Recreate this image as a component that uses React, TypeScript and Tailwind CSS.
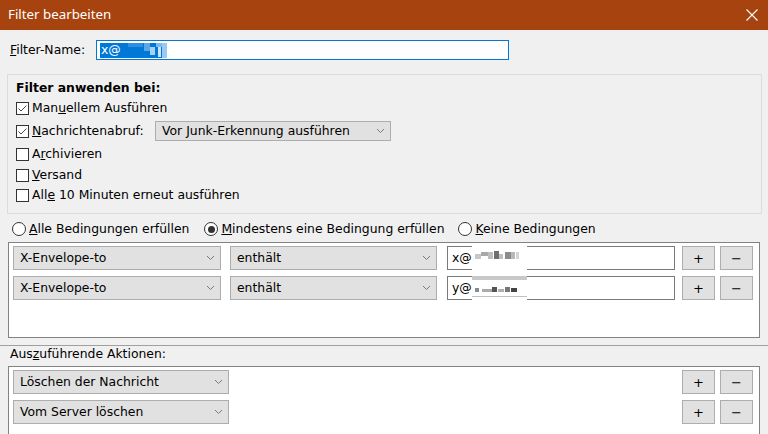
import React from "react";

function Chevron() {
  return (
    <svg width="9" height="6" viewBox="0 0 9 6" className="shrink-0">
      <polyline points="1,1 4.5,4.5 8,1" fill="none" stroke="#7a7a7a" strokeWidth="1" />
    </svg>
  );
}

function Select({ w, text, h = "h-[24px]" }: { w: string; text: string; h?: string }) {
  return (
    <div className={`${w} ${h} shrink-0 border border-[#adadad] bg-[#e1e1e1] flex items-center justify-between pl-[6px] pr-[5px]`}>
      <span className="whitespace-nowrap">{text}</span>
      <Chevron />
    </div>
  );
}

function Btn({ label }: { label: string }) {
  return (
    <div className="w-[33px] h-[24px] shrink-0 border border-[#adadad] bg-[#e1e1e1] flex items-center justify-center text-[13px]">
      {label}
    </div>
  );
}

function Checkbox({ checked }: { checked?: boolean }) {
  return (
    <div className="w-[13px] h-[13px] shrink-0 border border-[#333333] bg-white flex items-center justify-center">
      {checked && (
        <svg width="11" height="11" viewBox="0 0 11 11">
          <polyline points="1.5,5.5 4,8 9.5,2.5" fill="none" stroke="#4a4a4a" strokeWidth="1" />
        </svg>
      )}
    </div>
  );
}

function Radio({ checked }: { checked?: boolean }) {
  return (
    <div className="w-[14px] h-[14px] shrink-0 rounded-full border border-[#333333] bg-white flex items-center justify-center">
      {checked && <div className="w-[7px] h-[7px] rounded-full bg-[#333333]" />}
    </div>
  );
}

function Redact1() {
  return (
    <span className="relative inline-block w-[55px] h-[28px] bg-white -my-[3px]">
      <span className="absolute left-[3px] top-[10px] w-[6px] h-[5px] bg-[#c8c8c8]" />
      <span className="absolute left-[9px] top-[8px] w-[7px] h-[4px] bg-[#a8a8a8]" />
      <span className="absolute left-[16px] top-[8px] w-[5px] h-[7px] bg-[#bdbdbd]" />
      <span className="absolute left-[22px] top-[7px] w-[5px] h-[8px] bg-[#6e6e6e]" />
      <span className="absolute left-[27px] top-[10px] w-[4px] h-[5px] bg-[#c0c0c0]" />
      <span className="absolute left-[33px] top-[8px] w-[6px] h-[7px] bg-[#8c8c8c]" />
      <span className="absolute left-[39px] top-[8px] w-[4px] h-[7px] bg-[#b8b8b8]" />
      <span className="absolute left-[44px] top-[8px] w-[3px] h-[7px] bg-[#d4d4d4]" />
    </span>
  );
}

function Redact2() {
  return (
    <span className="relative inline-block w-[55px] h-[24px] bg-white -my-[2px]">
      <span className="absolute left-0 top-0 w-[55px] h-[4px] bg-[#c8c8c8]" />
      <span className="absolute left-[3px] top-[12px] w-[4px] h-[4px] bg-[#8a8a8a]" />
      <span className="absolute left-[10px] top-[13px] w-[10px] h-[3px] bg-[#aaaaaa]" />
      <span className="absolute left-[20px] top-[11px] w-[5px] h-[5px] bg-[#555555]" />
      <span className="absolute left-[26px] top-[13px] w-[6px] h-[3px] bg-[#b0b0b0]" />
      <span className="absolute left-[33px] top-[11px] w-[5px] h-[5px] bg-[#777777]" />
      <span className="absolute left-[39px] top-[12px] w-[6px] h-[4px] bg-[#444444]" />
      <span className="absolute left-0 top-[20px] w-[55px] h-[1px] bg-[#c0c0c0]" />
    </span>
  );
}

function CondRow({ prefix, redact }: { prefix: string; redact: React.ReactNode }) {
  return (
    <div className="h-[24px] flex items-center pr-[6px]">
      <Select w="w-[208px]" text="X-Envelope-to" />
      <div className="ml-[9px]">
        <Select w="w-[207px]" text="enthält" />
      </div>
      <div className="ml-[10px] w-[228px] h-[24px] border border-[#7a7a7a] bg-white flex items-center pl-[4px] overflow-visible">
        <span>{prefix}</span>
        {redact}
      </div>
      <div className="ml-auto flex gap-[5px]">
        <Btn label="+" />
        <Btn label="−" />
      </div>
    </div>
  );
}

function ActRow({ text }: { text: string }) {
  return (
    <div className="h-[24px] flex items-center pr-[6px]">
      <Select w="w-[216px]" text={text} />
      <div className="ml-auto flex gap-[5px]">
        <Btn label="+" />
        <Btn label="−" />
      </div>
    </div>
  );
}

export default function App() {
  return (
    <div className="w-[768px] h-[434px] overflow-hidden bg-[#f0f0f0] text-[12.4px] text-black font-['DejaVu_Sans',sans-serif] leading-none">
      {/* Title bar */}
      <div className="h-[30px] bg-[#a6430f] flex items-center justify-between pl-[8px] pr-[10px]">
        <span className="text-white text-[13.3px] font-['Noto_Sans',sans-serif]">Filter bearbeiten</span>
        <svg width="12" height="12" viewBox="0 0 12 12">
          <path d="M0.5 0.5 L11.5 11.5 M11.5 0.5 L0.5 11.5" stroke="#ffffff" strokeWidth="1.1" />
        </svg>
      </div>

      {/* Filter name */}
      <div className="mt-[10px] h-[20px] flex items-center pl-[10px]">
        <span className="w-[86px]">
          <u>F</u>ilter-Name:
        </span>
        <div className="w-[413px] h-[20px] border border-[#0078d7] bg-white flex items-center pl-[3px]">
          <span className="relative flex items-center h-[15px] bg-[#0078d7] text-white pl-[1px] w-[67px]">
            x@
            <span className="absolute left-[28px] top-0 w-[15px] h-[4px] bg-[#2f8ee0]" />
            <span className="absolute left-[44px] top-0 w-[6px] h-[8px] bg-[#5aa8ea]" />
            <span className="absolute left-[50px] top-[4px] w-[5px] h-[8px] bg-[#a9d0f3]" />
            <span className="absolute left-[56px] top-0 w-[6px] h-[4px] bg-[#7db9ee]" />
            <span className="absolute left-[58px] top-[4px] w-[3px] h-[10px] bg-[#cde3f7]" />
            <span className="absolute left-[62px] top-0 w-[5px] h-[15px] bg-[#9ac9f1]" />
          </span>
        </div>
      </div>

      {/* Fieldset */}
      <div className="mt-[14px] ml-[7px] w-[755px] h-[140px] border border-[#dcdcdc] pl-[8px] pt-[5px] flex flex-col">
        <div className="h-[17px] flex items-center font-bold">Filter anwenden bei:</div>
        <div className="h-[22px] flex items-center gap-[3px]">
          <Checkbox checked />
          <span>
            Man<u>u</u>ellem Ausführen
          </span>
        </div>
        <div className="h-[24px] flex items-center gap-[3px]">
          <Checkbox checked />
          <span className="w-[120px]">
            <u>N</u>achrichtenabruf:
          </span>
          <Select w="w-[236px]" h="h-[20px]" text="Vor Junk-Erkennung ausführen" />
        </div>
        <div className="h-[22px] flex items-center gap-[3px]">
          <Checkbox />
          <span>
            A<u>r</u>chivieren
          </span>
        </div>
        <div className="h-[20px] flex items-center gap-[3px]">
          <Checkbox />
          <span>
            <u>V</u>ersand
          </span>
        </div>
        <div className="h-[20px] flex items-center gap-[3px]">
          <Checkbox />
          <span>
            All<u>e</u> 10 Minuten erneut ausführen
          </span>
        </div>
      </div>

      {/* Radios */}
      <div className="mt-[5px] h-[20px] flex items-center pl-[12px]">
        <div className="flex items-center gap-[3px]">
          <Radio />
          <span>
            <u>A</u>lle Bedingungen erfüllen
          </span>
        </div>
        <div className="flex items-center gap-[3px] ml-[15px]">
          <Radio checked />
          <span>
            <u>M</u>indestens eine Bedingung erfüllen
          </span>
        </div>
        <div className="flex items-center gap-[3px] ml-[14px]">
          <Radio />
          <span>
            <u>K</u>eine Bedingungen
          </span>
        </div>
      </div>

      {/* Conditions list */}
      <div className="mt-[3px] ml-[8px] w-[752px] h-[96px] border border-[#828282] bg-white pl-[4px] pt-[3px] flex flex-col gap-[6px]">
        <CondRow prefix="x@" redact={<Redact1 />} />
        <CondRow prefix="y@" redact={<Redact2 />} />
      </div>

      {/* Splitter */}
      <div className="mt-[7px] h-[1px] bg-[#a0a0a0]" />

      <div className="h-[17px] flex items-center pl-[10px]">
        Aus<u>z</u>uführende Aktionen:
      </div>

      {/* Actions list */}
      <div className="mt-[3px] ml-[8px] w-[752px] h-[100px] border border-[#828282] bg-white pl-[4px] pt-[3px] flex flex-col gap-[6px]">
        <ActRow text="Löschen der Nachricht" />
        <ActRow text="Vom Server löschen" />
      </div>
    </div>
  );
}
